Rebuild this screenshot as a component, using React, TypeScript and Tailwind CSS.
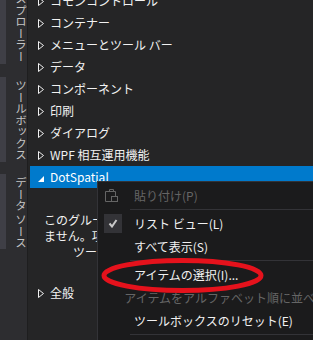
import React from 'react';

const groups = [
  'コモンコントロール',
  'コンテナー',
  'メニューとツール バー',
  'データ',
  'コンポーネント',
  '印刷',
  'ダイアログ',
  'WPF 相互運用機能',
];

const Collapsed = () => (
  <svg width="6" height="9" viewBox="0 0 6 9" className="mt-[1px]">
    <path d="M0.5 0.5 L5.5 4.5 L0.5 8.5 Z" fill="none" stroke="#f1f1f1" strokeWidth="1" />
  </svg>
);

const Expanded = () => (
  <svg width="6" height="6" viewBox="0 0 6 6" className="mt-[3px]">
    <path d="M6 0 L6 6 L0 6 Z" fill="#ffffff" />
  </svg>
);

const TreeRow: React.FC<{ label: string }> = ({ label }) => (
  <div className="h-[22px] flex items-center pl-[8px]">
    <div className="w-[12px] flex items-center">
      <Collapsed />
    </div>
    <span className="whitespace-nowrap">{label}</span>
  </div>
);

const SideTab: React.FC<{ label: string; height: string; top?: boolean }> = ({ label, height, top }) => (
  <div className={`flex ${height}`}>
    <div className="w-[6px] bg-[#3f3f46]" />
    <div
      className={`flex-1 flex flex-col overflow-hidden pl-[6px] ${top ? 'justify-end pb-[2px]' : 'justify-start pt-[3px]'}`}
    >
      <span className="[writing-mode:vertical-rl] text-[11.5px] leading-[12px] text-[#c4c4c4] whitespace-nowrap">
        {label}
      </span>
    </div>
  </div>
);

const MenuItem: React.FC<{ label: string; disabled?: boolean; icon?: React.ReactNode }> = ({
  label,
  disabled,
  icon,
}) => (
  <div className="h-[23px] flex items-center">
    <div className="w-[36px] h-full flex items-center pl-[6px]">{icon}</div>
    <span className={`whitespace-nowrap ${disabled ? 'text-[#656565]' : 'text-[#f1f1f1]'}`}>{label}</span>
  </div>
);

const Separator = () => (
  <div className="h-[5px] flex items-center pl-[32px]">
    <div className="h-px flex-1 bg-[#333337]" />
  </div>
);

const PasteIcon = () => (
  <svg width="14" height="15" viewBox="0 0 14 15" className="ml-[1px]">
    <path d="M4.5 3.5 V1.5 H8.5 V3.5" fill="none" stroke="#656565" />
    <path d="M0.5 3.5 H10.5 V8.5 M0.5 3.5 V13.5 H6.5" fill="none" stroke="#656565" />
    <rect x="6.5" y="8.5" width="6" height="5" fill="none" stroke="#656565" />
  </svg>
);

const CheckIcon = () => (
  <div className="w-[18px] h-[19px] bg-[#333337] flex items-center justify-center">
    <svg width="10" height="9" viewBox="0 0 10 9">
      <path d="M1.5 4.5 L4 7.5 L8.5 1" fill="none" stroke="#c8c8c8" strokeWidth="2" />
    </svg>
  </div>
);

export default function App() {
  return (
    <div className="relative w-[313px] h-[340px] overflow-hidden flex bg-[#2d2d30] font-['Noto_Sans_CJK_JP','Noto_Sans',sans-serif] text-[12px]">
      {/* auto-hide tab strip */}
      <div className="w-[27px] shrink-0 flex flex-col">
        <SideTab label="ソリューション エクスプローラー" height="h-[64px]" top />
        <div className="mt-[13px]">
          <SideTab label="ツールボックス" height="h-[85px]" />
        </div>
        <div className="mt-[12px]">
          <SideTab label="データ ソース" height="h-[75px]" />
        </div>
      </div>

      {/* toolbox panel */}
      <div className="flex-1 bg-[#252526] border-l border-[#1e1e1f] text-[#f1f1f1] overflow-hidden">
        <div className="-mt-[10px] pl-[2px]">
          {groups.map((g) => (
            <TreeRow key={g} label={g} />
          ))}
          <div className="h-[22px] flex items-center pl-[8px] bg-[#007acc]">
            <div className="w-[12px] flex items-center">
              <Expanded />
            </div>
            <span className="text-white">DotSpatial</span>
          </div>

          <div className="mt-[24px] leading-[16px] whitespace-nowrap">
            <div className="pl-[14px]">このグループには使用可能なコントロールがあり</div>
            <div className="pl-[14px]">ません。項目をこのテキストにドラッグして、</div>
            <div className="pl-[43px]">ツールボックスに追加します。</div>
          </div>

          <div className="mt-[22px]">
            <TreeRow label="全般" />
          </div>
        </div>
      </div>

      {/* context menu */}
      <div className="absolute left-[97px] top-[181px] w-[260px] bg-[#1b1b1c] border border-[#333337] pt-[2px] pb-[4px]">
        <MenuItem label="貼り付け(P)" disabled icon={<PasteIcon />} />
        <Separator />
        <MenuItem label="リスト ビュー(L)" icon={<CheckIcon />} />
        <MenuItem label="すべて表示(S)" />
        <Separator />
        <MenuItem label="アイテムの選択(I)..." />
        <MenuItem label="アイテムをアルファベット順に並べ替え(O)" disabled />
        <MenuItem label="ツールボックスのリセット(E)" />
        <Separator />
      </div>

      {/* red annotation */}
      <svg className="absolute left-0 top-0 pointer-events-none" width="313" height="340">
        <ellipse cx="182.5" cy="275.5" rx="78.5" ry="15" fill="none" stroke="#e5121c" strokeWidth="5" />
      </svg>
    </div>
  );
}
